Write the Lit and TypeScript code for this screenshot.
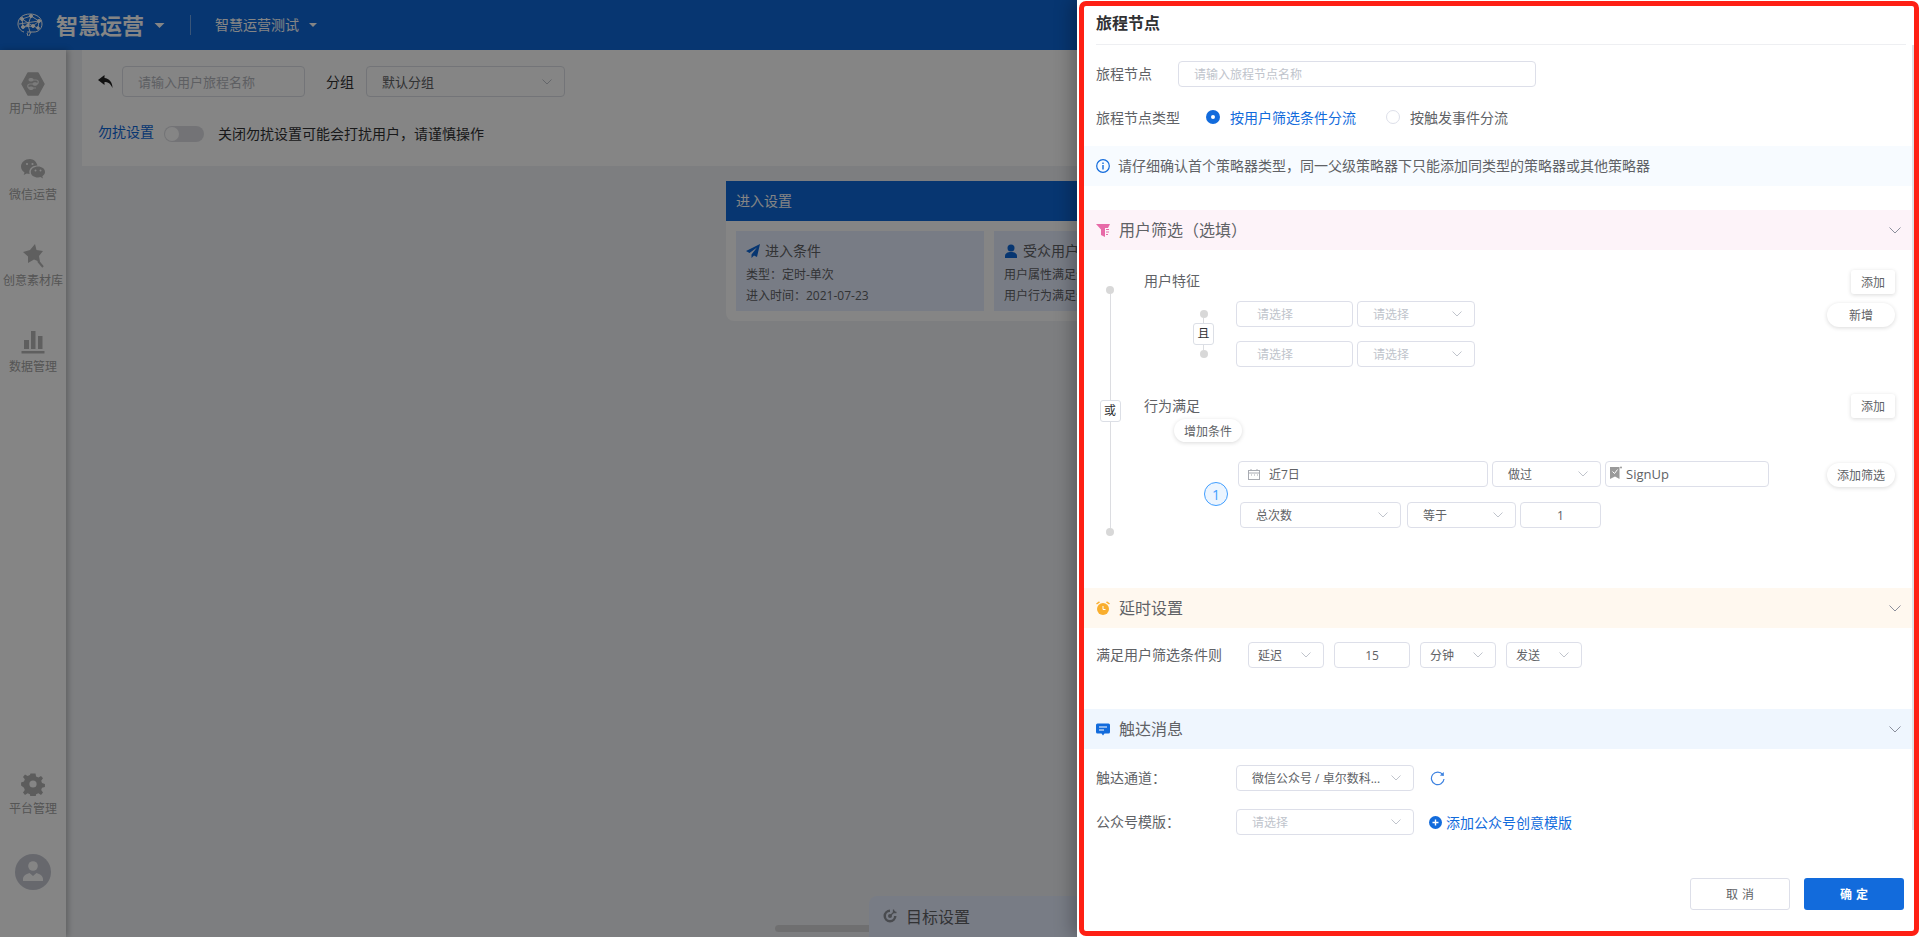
import { LitElement, html, css, svg } from "lit";
import { customElement } from "lit/decorators.js";

const chev = () => html`<svg class="chev" viewBox="0 0 10 6"><polyline points="0.5,0.5 5,5 9.5,0.5" fill="none" stroke="#c0c4cc" stroke-width="1"/></svg>`;
const secChev = () => html`<svg class="sec-chev" viewBox="0 0 12 7"><polyline points="0.5,0.5 6,6 11.5,0.5" fill="none" stroke="#8b8f9c" stroke-width="1"/></svg>`;
const caret = (c: string) => html`<svg class=${c} viewBox="0 0 10 5"><polygon points="0,0 10,0 5,5" fill="#fff"/></svg>`;

@customElement("app-root")
export class AppRoot extends LitElement {
  static styles = css`
    :host { display:block; position:relative; width:1920px; height:937px; overflow:hidden; background:#f0f2f5;
      font-family:"Open Sans","Noto Sans CJK SC","Noto Sans",sans-serif; font-size:14px; color:#303133; }
    * { box-sizing:border-box; }
    svg { display:block; flex:none; }
    .hdr { height:50px; background:#0e68d8; display:flex; align-items:center; color:#fff; }
    .logo { width:26px; height:24px; margin-left:17px; }
    .brand { font-size:22px; font-weight:700; margin-left:13px; line-height:30px; white-space:nowrap; }
    .car1 { width:11px; height:5px; margin-left:10px; }
    .vline { width:1px; height:20px; background:rgba(255,255,255,.4); margin-left:25px; }
    .sub { margin-left:24px; line-height:20px; white-space:nowrap; }
    .car2 { width:8px; height:4px; margin-left:10px; }
    .below { display:flex; height:887px; }
    .side { width:66px; background:#fff; box-shadow:2px 0 6px rgba(0,0,0,.25); display:flex; flex-direction:column; align-items:center; padding:22px 0 47px; flex:none; }
    .nav { height:86px; display:flex; flex-direction:column; align-items:center; }
    .nav svg { width:24px; height:24px; }
    .nav span { font-size:12px; line-height:16px; margin-top:5px; color:#a3a3a3; white-space:nowrap; }
    .nav.last { margin-top:auto; height:auto; margin-bottom:37px; }
    .ava { width:36px; height:36px; }
    .main { flex:1; min-width:0; }
    .top { margin-left:16px; height:116px; background:#fff; padding:16px; }
    .r1 { display:flex; align-items:center; height:31px; }
    .back { width:15px; height:13px; margin-right:9px; }
    .tinput { width:183px; height:31px; border:1px solid #dcdfe6; border-radius:4px; display:flex; align-items:center; padding-left:15px; font-size:13px; color:#b4b6bd; }
    .glabel { margin:0 12px 2px 21px; width:28px; white-space:nowrap; }
    .tsel { width:199px; height:31px; border:1px solid #dcdfe6; border-radius:4px; display:flex; align-items:center; justify-content:space-between; padding:0 12px 0 15px; font-size:13px; color:#606266; }
    .r2 { display:flex; align-items:center; height:20px; margin-top:27px; }
    .dnd { color:#0e68d8; margin-bottom:6px; white-space:nowrap; }
    .tog { width:40px; height:16px; border-radius:8px; background:#dcdde2; margin-left:10px; margin-right:14px; padding:1px; }
    .tog i { display:block; width:14px; height:14px; border-radius:50%; background:#fff; }
    .warn { margin-bottom:2px; }
    .enter { margin:15px 0 0 660px; width:548px; background:#fff; border-radius:0 0 8px 8px; height:140px; }
    .ehead { height:40px; background:#0e68d8; color:#fff; display:flex; align-items:center; padding:0 0 2px 10px; }
    .ebody { display:flex; gap:10px; padding:10px; }
    .ebox { width:248px; height:80px; background:#e7eeff; padding:10px; font-size:12px; color:#606266; white-space:nowrap; overflow:hidden; }
    .etitle { display:flex; align-items:center; font-size:14px; line-height:20px; }
    .etitle svg { width:14px; height:14px; margin-right:5px; }
    .eline { line-height:21px; }
    .eline.first { margin-top:3px; }
    .goal { position:absolute; left:869px; top:896px; width:240px; height:41px; background:#e7eeff; border-radius:8px 0 0 0; display:flex; align-items:center; padding:0 0 2px 14px; font-size:16px; color:#606266; }
    .goal svg { width:14px; height:14px; margin-right:9px; }
    .hscroll { position:absolute; left:775px; top:925px; width:120px; height:7px; background:#d5d5d7; border-radius:4px; }
    .mask { position:absolute; inset:0; background:rgba(0,0,0,.48); }
    .panel { position:absolute; left:1077px; top:0; right:0; bottom:0; background:#fff; padding:1px 1px 1px 2px; box-shadow:-6px 0 16px rgba(0,0,0,.25); }
    .frame { height:100%; border:5px solid #fe2014; border-radius:7px; display:flex; flex-direction:column; background:#fff; color:#606266; }
    .ptitle { margin:0 8px 0 12px; height:39px; border-bottom:1px solid #eeeff2; font-size:16px; font-weight:700; color:#303133; line-height:35px; flex:none; }
    .pbody { display:flex; height:785px; flex:none; }
    .content { flex:1; min-width:0; }
    .track { width:2px; background:#dfe0e3; }
    .row { display:flex; align-items:center; padding-left:12px; height:26px; color:#606266; white-space:nowrap; }
    .row.name { margin-top:16px; }
    .row.name .l { width:82px; margin-bottom:2px; }
    .pinput { width:358px; height:26px; border:1px solid #dddfe9; border-radius:4px; display:flex; align-items:center; padding-left:15px; font-size:12px; color:#c0c4cc; }
    .row.type { margin-top:17px; }
    .row.type .l { width:110px; }
    .radio { width:14px; height:14px; border-radius:50%; border:1px solid #dddfe9; margin-right:10px; flex:none; }
    .radio.on { border:none; background:#126bdc; display:flex; align-items:center; justify-content:center; }
    .radio.on i { width:4px; height:4px; background:#fff; border-radius:50%; }
    .blue { color:#126bdc; }
    .gap { margin-left:30px; display:flex; align-items:center; }
    .info { margin-top:16px; height:40px; background:#f7fbff; display:flex; align-items:center; padding:0 0 2px 12px; white-space:nowrap; }
    .info svg { width:14px; height:14px; margin:2px 8px 0 0; }
    .sec { height:40px; display:flex; align-items:center; padding:0 11px 2px 12px; font-size:16px; color:#606266; }
    .sec svg:first-child { width:14px; height:14px; margin:2px 9px 0 0; }
    .sec-chev { width:12px; height:7px; margin:2px 0 0 auto; }
    .pink { background:#fdf3f9; margin-top:24px; }
    .orange { background:#fff8ef; }
    .azure { background:#eff6fe; margin-top:41px; }
    .tree { display:flex; height:338px; padding-left:15px; }
    .spine { width:22px; height:250px; margin-top:36px; display:flex; flex-direction:column; align-items:center; flex:none; }
    .dot { width:8px; height:8px; border-radius:50%; background:#d8d8d8; flex:none; }
    .ln { flex:1; width:1px; background:#dcdde1; }
    .tag { width:21px; height:22px; border:1px solid #dcdfe6; border-radius:3px; font-size:12px; line-height:20px; text-align:center; color:#303133; background:#fff; flex:none; }
    .cols { margin-left:23px; width:751px; }
    .ghead { display:flex; align-items:center; justify-content:space-between; height:24px; color:#606266; }
    .ghead.g1 { margin-top:20px; }
    .ghead.g1 span { margin-bottom:4px; }
    .ghead.g2 { margin-top:27px; }
    .ghead.g2 span { margin-bottom:2px; }
    .btn { width:44px; height:24px; border-radius:3px; background:#fff; box-shadow:0 1px 4px rgba(0,0,0,.15); display:flex; align-items:center; justify-content:center; font-size:12px; color:#606266; flex:none; }
    .pill { width:68px; height:24px; border-radius:12px; background:#fff; box-shadow:0 1px 4px rgba(0,0,0,.15); display:flex; align-items:center; justify-content:center; font-size:12px; color:#606266; flex:none; margin-left:auto; margin-top:2px; white-space:nowrap; }
    .pill.add { width:68px; height:23px; margin:1px 0 0 30px; }
    .sub-g { display:flex; margin-top:7px; padding-left:49px; }
    .sspine { width:21px; height:48px; margin-top:9px; display:flex; flex-direction:column; align-items:center; flex:none; }
    .sspine .ln { flex:1; }
    .srows { margin-left:22px; display:flex; flex-direction:column; gap:14px; }
    .srow { display:flex; gap:4px; }
    .fld { height:26px; border:1px solid #dddfe9; border-radius:4px; display:flex; align-items:center; justify-content:space-between; padding:0 8px 0 15px; font-size:12px; color:#606266; white-space:nowrap; flex:none; background:#fff; }
    .fld.ph { color:#c0c4cc; }
    .fld.c { justify-content:center; padding:0; }
    .chev { width:10px; height:6px; }
    .w117 { width:117px; padding-left:20px; justify-content:flex-start; }
    .w118 { width:118px; padding-right:12px; }
    .beh { display:flex; margin-top:19px; padding-left:60px; }
    .num { width:24px; height:24px; border-radius:50%; border:1px solid #409eff; background:#ecf5ff; color:#409eff; font-size:14px; display:flex; align-items:center; justify-content:center; margin-top:21px; flex:none; }
    .bcol { margin-left:10px; flex:1; }
    .brow1 { display:flex; gap:4px; }
    .brow2 { display:flex; gap:4px; margin:15px 0 0 2px; }
    .w250 { width:250px; padding-left:9px; justify-content:flex-start; }
    .w250 svg { width:12px; height:11px; margin-right:9px; }
    .w109 { width:109px; padding-right:12px; }
    .w164 { width:164px; padding-left:4px; justify-content:flex-start; font-size:13px; }
    .w164 svg { width:12px; height:13px; margin:-3px 4px 0 0; }
    .w161 { width:161px; padding-right:12px; }
    .w109b { width:109px; padding-right:12px; margin-left:2px; }
    .w81 { width:81px; }
    .delay { display:flex; align-items:center; height:26px; margin-top:14px; padding-left:12px; white-space:nowrap; color:#606266; }
    .delay .l { width:152px; margin-bottom:2px; }
    .delay .g { display:flex; gap:10px; }
    .w76 { width:76px; padding:0 12px 0 9px; }
    .w76c { width:76px; }
    .msg { display:flex; align-items:center; height:26px; padding-left:12px; white-space:nowrap; color:#606266; }
    .msg.one { margin-top:16px; }
    .msg.two { margin-top:18px; }
    .msg .l { width:140px; margin-bottom:2px; }
    .w178 { width:178px; padding:0 12px 0 15px; }
    .refresh { width:15px; height:15px; margin-left:16px; }
    .plus { width:13px; height:13px; margin:0 4px 0 15px; }
    .foot { display:flex; justify-content:flex-end; gap:14px; margin-top:48px; padding-right:10px; }
    .bt { width:100px; height:32px; border-radius:3px; display:flex; align-items:center; justify-content:center; font-size:12px; word-spacing:1px; white-space:pre; }
    .cancel { border:1px solid #dddfe9; color:#606266; background:#fff; }
    .ok { background:#126bdc; color:#fff; font-weight:700; }
  `;

  private logo() {
    return svg`<svg class="logo" viewBox="0 0 26 24" fill="none" stroke="#fff" stroke-width="1">
      <path d="M7 19C3 18 1 14 1 11C1 5 6 1 13 1C20 1 25 5 25 11C25 16 21 19 17 19H10" />
      <path d="M14 19L12 23M10 20L11 23"/>
      <path d="M5 6L14 3L22 8L16 13L6 14L5 6L16 13M14 3L11 12L6 14M22 8L21 15L16 13M11 12L13 19M2 11L22 8" stroke-width=".9"/>
      <circle cx="5" cy="6" r="1.500" fill="#fff"/><circle cx="14" cy="3" r="1.500" fill="#fff"/><circle cx="22" cy="8" r="1.500" fill="#fff"/><circle cx="16" cy="13" r="1.500" fill="#fff"/><circle cx="6" cy="14" r="1.500" fill="#fff"/><circle cx="21" cy="15" r="1.300" fill="#fff"/><circle cx="11" cy="12" r="1.200" fill="#fff"/>
    </svg>`;
  }

  private sideNav() {
    const g = "#b6b6b6";
    return html`
      <div class="nav"><svg viewBox="0 0 24 24"><polygon points="7,1 17,1 23,12 17,23 7,23 1,12" fill=${g} stroke=${g} stroke-width="1.500" stroke-linejoin="round"/><path d="M10 8h5M9 16h6M15 8c3 0 3 4 0 4H9c-3 0-3 4 0 4" fill="none" stroke="#ececec" stroke-width="1.200"/><rect x="7.500" y="6" width="5" height="3.600" rx="1.800" fill="#ececec"/><rect x="11.500" y="10.200" width="5" height="3.600" rx="1.800" fill="#ececec"/><rect x="7.500" y="14.400" width="5" height="3.600" rx="1.800" fill="#ececec"/></svg><span>用户旅程</span></div>
      <div class="nav"><svg viewBox="0 0 24 24"><path d="M9 1C4 1 0 4.500 0 8.500C0 11 1.400 13 3.500 14.500L2.700 17L5.700 15.500C6.700 15.800 7.600 16 8.700 16C8.400 15.200 8.300 14.600 8.300 14C8.300 10.200 12 7.300 16.500 7.500C15.500 3.800 12.500 1 9 1Z" fill=${g}/><path d="M24 14C24 10.800 20.800 8.500 17 8.500S9.800 10.800 9.800 14S13 19.500 17 19.500C17.800 19.500 18.700 19.300 19.500 19.100L22 20.500L21.300 18.200C23 17 24 15.600 24 14Z" fill=${g}/><circle cx="6" cy="6" r="1.100" fill="#fff"/><circle cx="11.500" cy="6" r="1.100" fill="#fff"/><circle cx="14.500" cy="12.500" r="1" fill="#fff"/><circle cx="19.500" cy="12.500" r="1" fill="#fff"/></svg><span>微信运营</span></div>
      <div class="nav"><svg viewBox="0 0 24 24"><polygon points="14,0 15.500,6 22,7 18,12 19,18 13,15.500 7,19 7,12.500 2,8 9,6" fill=${g}/><path d="M17 17L22 23" stroke=${g} stroke-width="2"/></svg><span>创意素材库</span></div>
      <div class="nav"><svg viewBox="0 0 24 24"><rect x="3" y="10" width="5" height="9" fill=${g}/><rect x="10" y="1" width="4.500" height="18" fill=${g}/><rect x="17" y="6" width="4.500" height="13" fill=${g}/><rect x="0.500" y="21" width="23" height="2.500" fill=${g}/></svg><span>数据管理</span></div>
      <div class="nav last"><svg viewBox="0 0 24 24"><path d="M9.500 1.500h5l.6 3 2.300 1 2.600-1.600 2 2.400-1.800 2.400.8 2.300 2.900.9v3l-2.900.9-.8 2.300 1.800 2.400-2 2.400-2.600-1.600-2.300 1-.6 3h-5l-.6-3-2.300-1-2.600 1.600-2-2.400 1.800-2.400-.8-2.300L.1 13.500v-3l2.900-.9.800-2.300L2 4.900l2-2.400 2.600 1.600 2.300-1z" fill="#b0b0b0"/><circle cx="12" cy="12" r="3.600" fill="#fff"/></svg><span>平台管理</span></div>
      <svg class="ava" viewBox="0 0 36 36"><circle cx="18" cy="18" r="18" fill="#c5c8d2"/><circle cx="18" cy="12" r="4.800" fill="#fff"/><path d="M8 27v-2c0-3 3-5 6.500-6L18 22l3.500-3c3.500 1 6.500 3 6.500 6v2z" fill="#fff"/></svg>`;
  }

  private top() {
    return html`<div class="top">
      <div class="r1">
        <svg class="back" viewBox="0 0 15 13"><path d="M6.500 0L0 5L6.500 10V7C10 7 12.500 8.500 14.500 13C14.500 7 11 3.500 6.500 3Z" fill="#222"/></svg>
        <div class="tinput">请输入用户旅程名称</div>
        <div class="glabel">分组</div>
        <div class="tsel">默认分组 ${chev()}</div>
      </div>
      <div class="r2"><span class="dnd">勿扰设置</span><div class="tog"><i></i></div><span class="warn">关闭勿扰设置可能会打扰用户，请谨慎操作</span></div>
    </div>`;
  }

  private enter() {
    const b = "#0e68d8";
    return html`<div class="enter">
      <div class="ehead">进入设置</div>
      <div class="ebody">
        <div class="ebox">
          <div class="etitle"><svg viewBox="0 0 14 14"><path d="M14 0L0 7L3.500 9L11 3.500L5.500 10.500V14L8 11.500L11 13Z" fill=${b}/></svg>进入条件</div>
          <div class="eline first">类型：定时-单次</div>
          <div class="eline">进入时间：2021-07-23</div>
        </div>
        <div class="ebox">
          <div class="etitle"><svg viewBox="0 0 14 14"><circle cx="7" cy="4" r="3.500" fill=${b}/><path d="M1 14v-2c0-2.500 2.500-4 6-4s6 1.500 6 4v2z" fill=${b}/></svg>受众用户</div>
          <div class="eline first">用户属性满足全部条件</div>
          <div class="eline">用户行为满足全部条件</div>
        </div>
      </div>
    </div>`;
  }

  private filter() {
    return html`<div class="tree">
      <div class="spine"><div class="dot"></div><div class="ln"></div><div class="tag">或</div><div class="ln"></div><div class="dot"></div></div>
      <div class="cols">
        <div class="ghead g1"><span>用户特征</span><div class="btn">添加</div></div>
        <div class="sub-g">
          <div class="sspine"><div class="dot"></div><div class="ln"></div><div class="tag">且</div><div class="ln"></div><div class="dot"></div></div>
          <div class="srows">
            <div class="srow"><div class="fld ph w117">请选择</div><div class="fld ph w118">请选择 ${chev()}</div></div>
            <div class="srow"><div class="fld ph w117">请选择</div><div class="fld ph w118">请选择 ${chev()}</div></div>
          </div>
          <div class="pill">新增</div>
        </div>
        <div class="ghead g2"><span>行为满足</span><div class="btn">添加</div></div>
        <div class="pill add">增加条件</div>
        <div class="beh">
          <div class="num">1</div>
          <div class="bcol">
            <div class="brow1">
              <div class="fld w250"><svg viewBox="0 0 12 11"><rect x="0.500" y="1.500" width="11" height="9" fill="none" stroke="#a8abb2"/><path d="M0 4h12M3 0v2M9 0v2M3 6h1M6 6h1M9 6h1" stroke="#a8abb2"/></svg>近7日</div>
              <div class="fld w109">做过 ${chev()}</div>
              <div class="fld w164"><svg viewBox="0 0 12 13"><path d="M0 1h9.500v12L5 10.500L0 13Z" fill="#9a9a9a"/><path d="M2.500 5.500L4.500 7.500L7.500 3.500" stroke="#fff" fill="none"/><circle cx="11" cy="1.500" r="1" fill="#9a9a9a"/></svg>SignUp</div>
              <div class="pill">添加筛选</div>
            </div>
            <div class="brow2">
              <div class="fld w161">总次数 ${chev()}</div>
              <div class="fld w109b">等于 ${chev()}</div>
              <div class="fld c w81">1</div>
            </div>
          </div>
        </div>
      </div>
    </div>`;
  }

  private panel() {
    return html`<div class="panel"><div class="frame">
      <div class="ptitle">旅程节点</div>
      <div class="pbody">
        <div class="content">
          <div class="row name"><span class="l">旅程节点</span><div class="pinput">请输入旅程节点名称</div></div>
          <div class="row type"><span class="l">旅程节点类型</span>
            <div class="radio on"><i></i></div><span class="blue">按用户筛选条件分流</span>
            <div class="gap"><div class="radio"></div><span>按触发事件分流</span></div>
          </div>
          <div class="info"><svg viewBox="0 0 14 14"><circle cx="7" cy="7" r="6.300" fill="none" stroke="#126bdc" stroke-width="1.200"/><rect x="6.300" y="6" width="1.400" height="4.500" fill="#126bdc"/><rect x="6.300" y="3.500" width="1.400" height="1.500" fill="#126bdc"/></svg>请仔细确认首个策略器类型，同一父级策略器下只能添加同类型的策略器或其他策略器</div>
          <div class="sec pink"><svg viewBox="0 0 14 14"><path d="M0 1H14L12 5H9V14L5 12V6.500Z" fill="#e76aa8"/><path d="M10 6.500h3M10 9h3M10 11.500h2" stroke="#e76aa8"/></svg>用户筛选（选填）${secChev()}</div>
          ${this.filter()}
          <div class="sec orange"><svg viewBox="0 0 14 14"><circle cx="7" cy="8" r="6" fill="#f9ae2e"/><path d="M0.500 3L3.500 0.800M13.500 3L10.500 0.800" stroke="#f9ae2e" stroke-width="1.500"/><path d="M7 5v3.500h2.500" stroke="#fff" fill="none"/></svg>延时设置${secChev()}</div>
          <div class="delay"><span class="l">满足用户筛选条件则</span>
            <div class="g">
              <div class="fld w76">延迟 ${chev()}</div>
              <div class="fld c w76c">15</div>
              <div class="fld w76">分钟 ${chev()}</div>
              <div class="fld w76">发送 ${chev()}</div>
            </div>
          </div>
          <div class="sec azure"><svg viewBox="0 0 14 14"><path d="M1.500 1.500h11a1.500 1.500 0 0 1 1.500 1.500v7a1.500 1.500 0 0 1-1.500 1.500H8.500L7 13.500L5.500 11.500h-4A1.500 1.500 0 0 1 0 10V3a1.500 1.500 0 0 1 1.500-1.500Z" fill="#126bdc"/><path d="M3 5h8M3 8h5" stroke="#fff"/></svg>触达消息${secChev()}</div>
          <div class="msg one"><span class="l">触达通道：</span><div class="fld w178"><span>微信公众号 / 卓尔数科...</span>${chev()}</div>
            <svg class="refresh" viewBox="0 0 15 15"><path d="M12.800 3.600A6.300 6.300 0 1 0 14 8" fill="none" stroke="#3d82e0" stroke-width="1.200"/><polygon points="13.800,1 13.800,5 9.800,4.500" fill="#3d82e0"/></svg>
          </div>
          <div class="msg two"><span class="l">公众号模版：</span><div class="fld ph w178">请选择 ${chev()}</div>
            <svg class="plus" viewBox="0 0 13 13"><circle cx="6.500" cy="6.500" r="6.500" fill="#126bdc"/><path d="M3.500 6.500h6M6.500 3.500v6" stroke="#fff" stroke-width="1.400"/></svg><span class="blue">添加公众号创意模版</span>
          </div>
        </div>
        <div class="track"></div>
      </div>
      <div class="foot"><div class="bt cancel">取 消</div><div class="bt ok">确 定</div></div>
    </div></div>`;
  }

  render() {
    return html`
      <div class="hdr">${this.logo()}<span class="brand">智慧运营</span>${caret("car1")}<div class="vline"></div><span class="sub">智慧运营测试</span>${caret("car2")}</div>
      <div class="below">
        <div class="side">${this.sideNav()}</div>
        <div class="main">${this.top()}${this.enter()}</div>
      </div>
      <div class="hscroll"></div>
      <div class="goal"><svg viewBox="0 0 14 14"><path d="M7 0.500A6.500 6.500 0 1 0 13.500 7H11A4 4 0 1 1 7 3Z" fill="#8d9098"/><circle cx="7" cy="7" r="2" fill="#8d9098"/><path d="M7 7L12 2M10.500 0.500V3.500H13.500" stroke="#8d9098" stroke-width="1.300" fill="none"/></svg>目标设置</div>
      <div class="mask"></div>
      ${this.panel()}
    `;
  }
}
